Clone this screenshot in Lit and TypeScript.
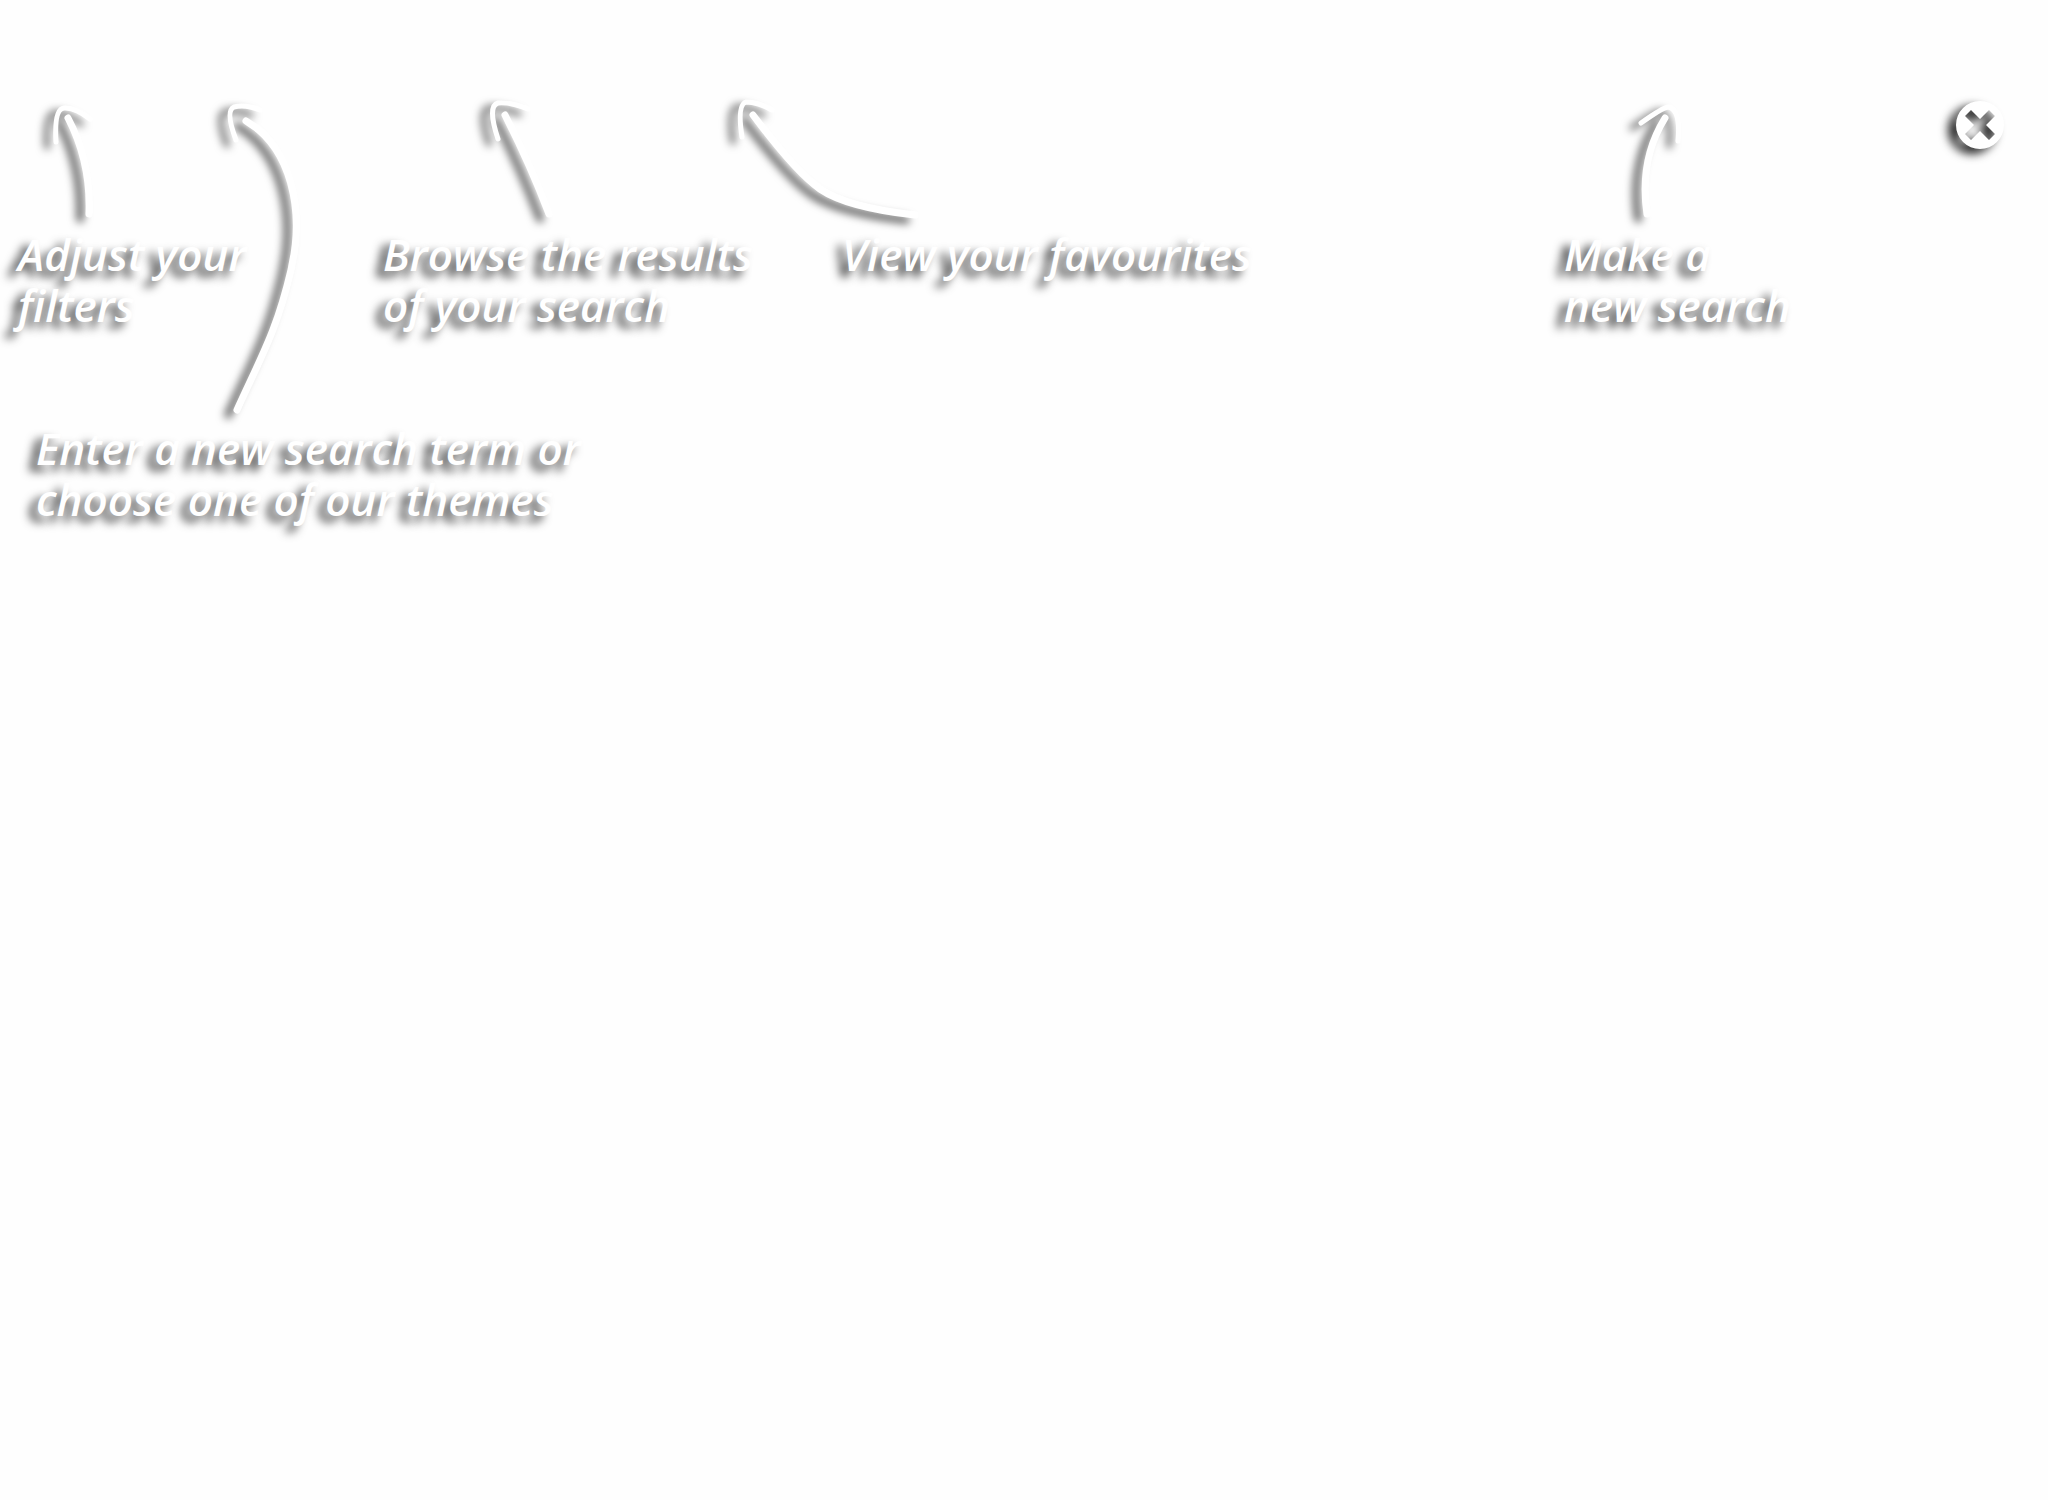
import { LitElement, html, css, svg } from "lit";
import { customElement, property } from "lit/decorators.js";

interface Hint {
  name: string;
  lines: string[];
  viewBox: string;
  shaft: string;
  head: string;
}

const HINTS: Hint[] = [
  {
    name: "filters",
    lines: ["Adjust your", "filters"],
    viewBox: "40 101 60 128",
    shaft: "M68 118 Q91 162 89 214",
    head: "M56 142 Q54 109 64 108 Q75 107 90 119",
  },
  {
    name: "browse",
    lines: ["Browse the results", "of your search"],
    viewBox: "480 101 80 128",
    shaft: "M505 115 Q530 164 549 214",
    head: "M498 139 Q487 106 498 103 Q511 102 528 109",
  },
  {
    name: "favourites",
    lines: ["View your favourites"],
    viewBox: "730 101 190 128",
    shaft: "M753 115 C777 147 801 176 820 189 S870 210 915 215",
    head: "M742 137 Q737 105 746 102 Q758 102 772 110",
  },
  {
    name: "restart",
    lines: ["Make a", "new search"],
    viewBox: "1630 101 60 128",
    shaft: "M1665 118 Q1639 160 1647 214",
    head: "M1641 123 Q1662 108 1668 107 Q1681 109 1678 141",
  },
  {
    name: "themes",
    lines: ["Enter a new search term or", "choose one of our themes"],
    viewBox: "220 101 90 322",
    shaft: "M246 121 C291 147 305 210 291 270 S262 355 237 410",
    head: "M236 140 Q225 111 234 107 Q245 104 260 110",
  },
];

@customElement("coach-hint")
export class CoachHint extends LitElement {
  @property({ attribute: false }) hint!: Hint;

  static styles = css`
    :host {
      display: block;
    }
    .arrow {
      display: block;
      overflow: visible;
      margin-left: var(--arrow-start, 0);
      filter: drop-shadow(-9px 5px 4px rgba(0, 0, 0, 0.65));
    }
    .shaft,
    .head {
      fill: none;
      stroke: #fff;
      stroke-width: 7;
      stroke-linecap: round;
      stroke-linejoin: round;
    }
    .head {
      stroke-width: 5;
    }
    .text {
      margin: 0;
      padding-left: var(--text-start, 0);
      color: #fff;
      font: italic 600 44px/51px "Open Sans", "Noto Sans", sans-serif;
      white-space: nowrap;
      text-shadow: -8px 6px 10px rgba(0, 0, 0, 0.8);
    }
    .line {
      display: block;
    }
  `;

  render() {
    const { viewBox, shaft, head, lines } = this.hint;
    const [, , width, height] = viewBox.split(" ");
    return html`
      <svg class="arrow" width=${width} height=${height} viewBox=${viewBox} aria-hidden="true">
        ${svg`<path class="shaft" d=${shaft}></path><path class="head" d=${head}></path>`}
      </svg>
      <p class="text">${lines.map((l) => html`<span class="line">${l}</span>`)}</p>
    `;
  }
}

@customElement("app-root")
export class AppRoot extends LitElement {
  static styles = css`
    :host {
      display: block;
      min-height: 100vh;
      background: #fefefe;
    }
    .overlay {
      display: grid;
      grid-template-columns: 365px 365px 1fr 380px 104px;
      align-items: start;
      padding-top: 101px;
    }
    .hint {
      grid-row: 1;
    }
    .filters {
      grid-column: 1;
      --arrow-start: 40px;
      --text-start: 18px;
    }
    .browse {
      grid-column: 2;
      --arrow-start: 115px;
      --text-start: 18px;
    }
    .favourites {
      grid-column: 3;
      --text-start: 112px;
    }
    .restart {
      grid-column: 4;
      --arrow-start: 66px;
    }
    .themes {
      grid-column: 1 / 3;
      --arrow-start: 220px;
      --text-start: 36px;
    }
    .close {
      grid-row: 1;
      grid-column: 5;
      margin: 0 0 0 12px;
      padding: 0;
      width: 48px;
      height: 48px;
      border: 0;
      background: none;
      cursor: pointer;
    }
    .badge {
      display: block;
      overflow: visible;
      fill: #fff;
      filter: drop-shadow(-8px 5px 5px rgba(0, 0, 0, 0.85));
    }
  `;

  render() {
    return html`
      <main class="overlay">
        ${HINTS.map((h) => html`<coach-hint class="hint ${h.name}" .hint=${h}></coach-hint>`)}
        <button class="close" type="button" aria-label="Close">
          <svg class="badge" width="48" height="48" viewBox="0 0 48 48" aria-hidden="true">
            <path
              fill-rule="evenodd"
              d="M24 0a24 24 0 1 0 0 48a24 24 0 1 0 0-48Z M15 9l9 9 9-9 6 6-9 9 9 9-6 6-9-9-9 9-6-6 9-9-9-9Z"
            ></path>
          </svg>
        </button>
      </main>
    `;
  }
}
